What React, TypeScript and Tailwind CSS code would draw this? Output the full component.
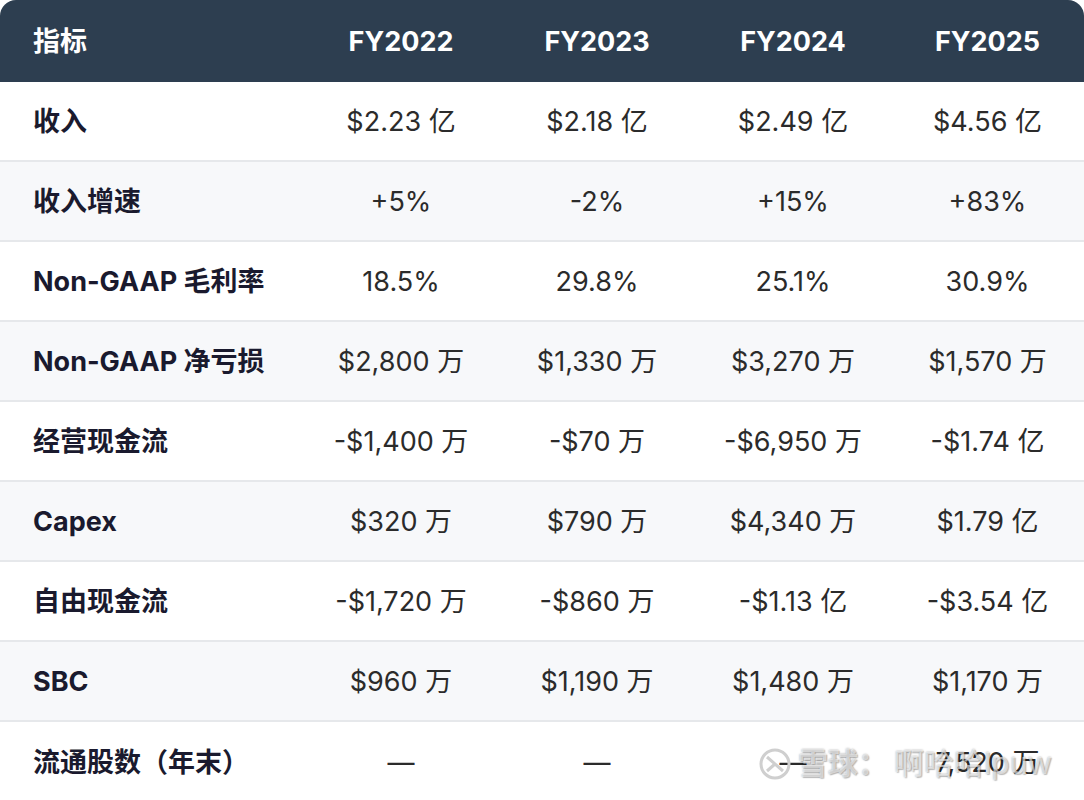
import React from "react";

const years = ["FY2022", "FY2023", "FY2024", "FY2025"];

const rows: [string, string[]][] = [
  ["收入", ["$2.23 亿", "$2.18 亿", "$2.49 亿", "$4.56 亿"]],
  ["收入增速", ["+5%", "-2%", "+15%", "+83%"]],
  ["Non-GAAP 毛利率", ["18.5%", "29.8%", "25.1%", "30.9%"]],
  ["Non-GAAP 净亏损", ["$2,800 万", "$1,330 万", "$3,270 万", "$1,570 万"]],
  ["经营现金流", ["-$1,400 万", "-$70 万", "-$6,950 万", "-$1.74 亿"]],
  ["Capex", ["$320 万", "$790 万", "$4,340 万", "$1.79 亿"]],
  ["自由现金流", ["-$1,720 万", "-$860 万", "-$1.13 亿", "-$3.54 亿"]],
  ["SBC", ["$960 万", "$1,190 万", "$1,480 万", "$1,170 万"]],
  ["流通股数（年末）", ["—", "—", "—", "7,520 万"]],
];

function Watermark() {
  return (
    <div className="absolute right-[32px] bottom-[16px] flex items-center gap-[6px] text-[30px] font-bold text-white/60 [text-shadow:0_0_2px_rgba(0,0,0,0.35),1px_1px_1px_rgba(0,0,0,0.2)] pointer-events-none">
      <svg width="34" height="34" viewBox="0 0 34 34" fill="none" stroke="#cfcfcf" strokeWidth="3">
        <circle cx="17" cy="17" r="14" />
        <path d="M9 10l16 14M9 24l8-7" />
      </svg>
      <span>雪球：</span>
      <span className="font-normal">啊哈哈lpuw</span>
    </div>
  );
}

export default function App() {
  return (
    <div className="w-[1084px] h-[800px] bg-white font-['Inter','Noto_Sans_CJK_SC',sans-serif]">
      <div className="relative rounded-[16px] overflow-hidden bg-white">
        <div className="grid grid-cols-[303px_196px_196px_196px_193px] h-[82px] pt-[3px] bg-[#2d3e50] text-white font-bold items-center">
          <div className="pl-[33px] text-[27px]">指标</div>
          {years.map((y) => (
            <div key={y} className="text-center text-[27px]">{y}</div>
          ))}
        </div>
        {rows.map(([label, vals], i) => (
          <div
            key={label}
            className={`grid grid-cols-[303px_196px_196px_196px_193px] h-[80px] pt-[3px] items-center ${i % 2 === 1 ? "bg-[#f7f8fa]" : "bg-white"} ${i < rows.length - 1 ? "border-b-2 border-[#e6e8eb]" : ""}`}
          >
            <div className="pl-[33px] text-[27px] font-bold text-[#1a1a2e]">{label}</div>
            {vals.map((v, j) => (
              <div key={j} className="text-center text-[27px] text-[#2b2b2b]">{v}</div>
            ))}
          </div>
        ))}
        <Watermark />
      </div>
    </div>
  );
}
